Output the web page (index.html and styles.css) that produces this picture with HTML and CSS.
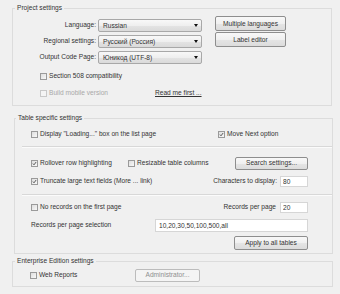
FILE: index.html
```html
<!DOCTYPE html>
<html>
<head>
<meta charset="utf-8">
<link rel="stylesheet" href="styles.css">
</head>
<body>
<div class="dialog">
  <fieldset class="group g-project">
    <legend>Project settings</legend>
    <div class="lang-grid">
      <span class="lbl">Language:</span>
      <div class="combo"><span>Russian</span><i class="arrow"></i></div>
      <button class="btn btn-top">Multiple languages</button>
      <span class="lbl">Regional settings:</span>
      <div class="combo"><span>Русский (Россия)</span><i class="arrow"></i></div>
      <button class="btn btn-top">Label editor</button>
      <span class="lbl">Output Code Page:</span>
      <div class="combo"><span>Юникод (UTF-8)</span><i class="arrow"></i></div>
      <span></span>
    </div>
    <div class="row r-508">
      <label class="chk"><span class="box"></span>Section 508 compatibility</label>
    </div>
    <div class="row r-mobile">
      <label class="chk disabled w-mobile"><span class="box"></span>Build mobile version</label>
      <a class="link">Read me first ...</a>
    </div>
  </fieldset>

  <fieldset class="group g-table">
    <legend>Table specific settings</legend>
    <div class="trow r-a">
      <label class="chk w-display"><span class="box"></span>Display "Loading..." box on the list page</label>
      <label class="chk"><span class="box checked"><svg viewBox="0 0 7 7"><path d="M1.3 3.6 L2.8 5.3 L5.8 1.4"/></svg></span>Move Next option</label>
    </div>
    <div class="sep"></div>
    <div class="trow r-b">
      <label class="chk w-rollover"><span class="box checked"><svg viewBox="0 0 7 7"><path d="M1.3 3.6 L2.8 5.3 L5.8 1.4"/></svg></span>Rollover row highlighting</label>
      <label class="chk grow"><span class="box"></span>Resizable table columns</label>
      <button class="btn btn-search">Search settings...</button>
    </div>
    <div class="trow r-c">
      <label class="chk grow"><span class="box checked"><svg viewBox="0 0 7 7"><path d="M1.3 3.6 L2.8 5.3 L5.8 1.4"/></svg></span>Truncate large text fields (More ... link)</label>
      <span class="side-lbl">Characters to display:</span>
      <input class="field f-small" type="text" value="80" readonly>
    </div>
    <div class="sep"></div>
    <div class="trow r-d">
      <label class="chk grow"><span class="box"></span>No records on the first page</label>
      <span class="side-lbl">Records per page</span>
      <input class="field f-small f-rpp" type="text" value="20" readonly>
    </div>
    <div class="trow r-e">
      <span class="grow">Records per page selection</span>
      <input class="field f-wide" type="text" value="10,20,30,50,100,500,all" readonly>
    </div>
    <div class="trow r-f">
      <button class="btn btn-apply">Apply to all tables</button>
    </div>
  </fieldset>

  <fieldset class="group g-ent">
    <legend>Enterprise Edition settings</legend>
    <div class="erow">
      <label class="chk w-web"><span class="box"></span>Web Reports</label>
      <button class="btn btn-admin" disabled>Administrator...</button>
    </div>
  </fieldset>
</div>
</body>
</html>
```

FILE: styles.css
```css
* {
  box-sizing: border-box;
}

html,
body {
  margin: 0;
  padding: 0;
  background: #f0f0f0;
}

body {
  width: 340px;
  height: 294px;
  overflow: hidden;
  font-family: "Liberation Sans", Arial, sans-serif;
  font-size: 6.6px;
  line-height: 8px;
  color: #333;
}

.dialog {
  padding-top: 4px;
}

.group {
  border: 1px solid #dcdcdc;
  margin: 0;
  padding: 0;
  min-width: 0;
}

.group legend {
  padding: 0 2px;
  margin-left: 2px;
  line-height: 8px;
}

/* ---------- Project settings ---------- */
.g-project {
  margin: 0 8px 0 12px;
  padding-bottom: 6px;
}

.lang-grid {
  display: grid;
  grid-template-columns: 83px 104px 82px;
  grid-auto-rows: 16px;
  column-gap: 2px;
  margin-top: 4px;
}

.lbl {
  text-align: right;
  align-self: center;
  white-space: nowrap;
  padding-top: 1px;
}

.combo {
  align-self: end;
  height: 13px;
  display: flex;
  align-items: center;
  justify-content: space-between;
  padding: 0 3px 0 4px;
  border: 1px solid #a8a8a8;
  border-radius: 2px;
  background: linear-gradient(#f8f8f8, #efefef 50%, #e4e4e4 51%, #dadada);
  white-space: nowrap;
}

.arrow {
  width: 0;
  height: 0;
  border-left: 2.5px solid transparent;
  border-right: 2.5px solid transparent;
  border-top: 3px solid #111;
}

.btn {
  font: inherit;
  color: #333;
  padding: 0;
  border: 1px solid #8e8e8e;
  border-radius: 2px;
  background: linear-gradient(#f8f8f8, #f0f0f0 50%, #e5e5e5 51%, #dcdcdc);
  white-space: nowrap;
  line-height: 8px;
}

.btn-top {
  width: 71px;
  height: 15px;
  justify-self: end;
}

.row {
  display: flex;
  align-items: center;
  height: 12px;
  padding-left: 27px;
}

.r-508 {
  margin-top: 6px;
}

.r-mobile {
  margin-top: 5px;
}

.chk {
  display: flex;
  align-items: center;
  white-space: nowrap;
}

.box {
  flex: none;
  width: 7px;
  height: 7px;
  margin-right: 2px;
  border: 1px solid #9a9a9a;
  background: linear-gradient(135deg, #dedede, #f8f8f8);
  display: flex;
}

.box svg {
  width: 5px;
  height: 5px;
  margin: 0;
  overflow: visible;
}

.box svg path {
  fill: none;
  stroke: #333;
  stroke-width: 1.1;
}

.disabled {
  color: #a8a8a8;
}

.disabled .box {
  border-color: #c8c8c8;
  background: #f4f4f4;
}

.w-mobile {
  width: 115px;
}

.link {
  color: #333;
  text-decoration: underline;
}

/* ---------- Table specific settings ---------- */
.g-table {
  margin: 8px 7px 0 14px;
  padding-bottom: 3px;
}

.g-table legend {
  margin-left: 1px;
}

.trow {
  display: flex;
  align-items: center;
  height: 14px;
  padding: 0 24px 0 16px;
  white-space: nowrap;
}

.r-a {
  height: 12px;
  margin-top: 6px;
}

.w-display {
  width: 187px;
}

.sep {
  height: 2px;
  margin: 6px 0 0 7px;
  border-top: 1px solid #d8d8d8;
  border-bottom: 1px solid #fbfbfb;
}

.r-b {
  margin-top: 8px;
}

.w-rollover {
  width: 97px;
}

.grow {
  flex: 1;
}

.btn-search {
  width: 73px;
  height: 13px;
}

.r-c,
.r-d,
.r-e,
.r-f {
  margin-top: 4px;
}

.side-lbl {
  margin-right: 3px;
}

.field {
  font: inherit;
  color: #333;
  background: #fff;
  border: 1px solid #d6d6d6;
  border-radius: 0;
  padding: 0 2px;
  margin: 0;
  outline: none;
}

.f-small {
  width: 28px;
  height: 11px;
}

.f-rpp {
  margin-left: 1px;
}

.f-wide {
  width: 153px;
  height: 13px;
  padding-left: 3px;
}

.r-f {
  justify-content: flex-end;
}

.btn-apply {
  width: 74px;
  height: 14px;
}

/* ---------- Enterprise Edition settings ---------- */
.g-ent {
  margin: 3px 7px 0 12px;
  padding-bottom: 4px;
}

.erow {
  display: flex;
  align-items: center;
  height: 14px;
  margin-top: 3px;
  padding-left: 17px;
}

.w-web {
  width: 105px;
}

.btn-admin {
  width: 65px;
  height: 13px;
  color: #8f8f8f;
  border-color: #bcbcbc;
  background: #f4f4f4;
}
```
